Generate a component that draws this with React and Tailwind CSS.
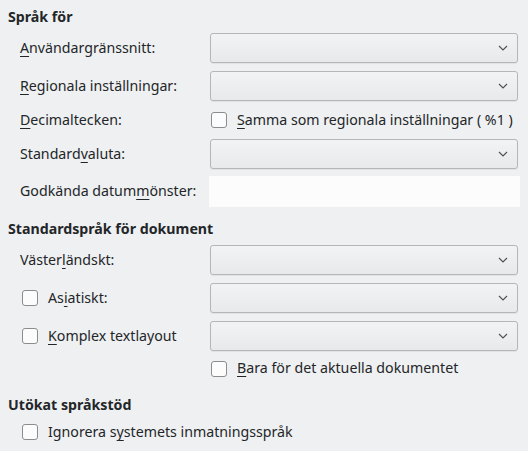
import React from 'react'

const Chevron = () => (
  <svg width="10" height="6" viewBox="0 0 10 6" className="shrink-0">
    <path d="M1 1 L5 5 L9 1" fill="none" stroke="#4d4f51" strokeWidth="1.1" />
  </svg>
)

const Dropdown = () => (
  <div className="flex-1 h-[30px] flex items-center justify-end pr-[9px] rounded-[3px] border border-[#b4b6b8] bg-gradient-to-b from-[#f2f3f4] to-[#e8e9ea] shadow-[0_1px_1px_rgba(0,0,0,0.06)]">
    <Chevron />
  </div>
)

const Box = () => (
  <span className="inline-block w-[16px] h-[16px] rounded-[3px] border border-[#8a8c8e] bg-[#fcfcfc] shrink-0" />
)

const U = ({ children }) => (
  <span className="underline underline-offset-[3px] decoration-[1px]">{children}</span>
)

const Heading = ({ children, className = '' }) => (
  <div className={`h-[18px] flex items-center pl-[8px] font-bold ${className}`}>{children}</div>
)

const LabelRow = ({ label, className = '' }) => (
  <div className={`h-[30px] flex items-center ${className}`}>
    <div className="w-[210px] pl-[20px] shrink-0">{label}</div>
    <Dropdown />
    <div className="w-[10px]" />
  </div>
)

const CheckLabelRow = ({ label, className = '' }) => (
  <div className={`h-[30px] flex items-center ${className}`}>
    <div className="w-[210px] pl-[22px] shrink-0 flex items-center gap-[10px]">
      <Box />
      <span>{label}</span>
    </div>
    <Dropdown />
    <div className="w-[10px]" />
  </div>
)

export default function App() {
  return (
    <div
      className="w-[528px] h-[451px] bg-[#eff0f1] text-[#232629] text-[14.2px] leading-none pt-[8px] overflow-hidden"
      style={{ fontFamily: '"Noto Sans", sans-serif' }}
    >
      <Heading>Språk för</Heading>
      <LabelRow className="mt-[7px]" label={<><U>A</U>nvändargränssnitt:</>} />
      <LabelRow className="mt-[8px]" label={<><U>R</U>egionala inställningar:</>} />
      <div className="h-[22px] mt-[8px] flex items-center">
        <div className="w-[210px] pl-[20px] shrink-0"><U>D</U>ecimaltecken:</div>
        <div className="flex items-center gap-[10px] pl-[1px]">
          <Box />
          <span><U>S</U>amma som regionala inställningar ( %1 )</span>
        </div>
      </div>
      <LabelRow className="mt-[8px]" label={<>Standard<U>v</U>aluta:</>} />
      <div className="h-[31px] mt-[7px] flex items-center">
        <div className="w-[209px] pl-[20px] shrink-0">Godkända datum<U>m</U>önster:</div>
        <div className="flex-1 h-full bg-[#fcfcfc]" />
        <div className="w-[8px]" />
      </div>
      <Heading className="mt-[13px]">Standardspråk för dokument</Heading>
      <LabelRow className="mt-[7px]" label={<>Väster<U>l</U>ändskt:</>} />
      <CheckLabelRow className="mt-[8px]" label={<>As<U>i</U>atiskt:</>} />
      <CheckLabelRow className="mt-[8px]" label={<><U>K</U>omplex textlayout</>} />
      <div className="h-[19px] mt-[8px] flex items-center pl-[211px] gap-[10px]">
        <Box />
        <span><U>B</U>ara för det aktuella dokumentet</span>
      </div>
      <Heading className="mt-[18px]">Utökat språkstöd</Heading>
      <div className="h-[18px] mt-[9px] flex items-center pl-[22px] gap-[10px]">
        <Box />
        <span>Ignorera s<U>y</U>stemets inmatningsspråk</span>
      </div>
    </div>
  )
}
